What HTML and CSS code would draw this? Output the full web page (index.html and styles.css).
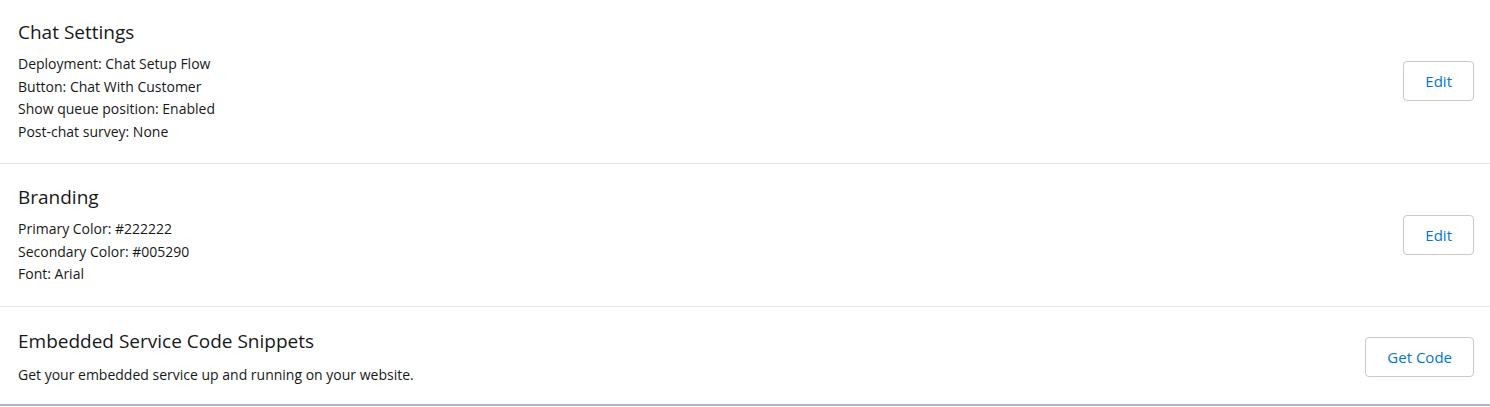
FILE: index.html
```html
<!DOCTYPE html>
<html lang="en">
<head>
  <meta charset="UTF-8">
  <title>Embedded Service Settings</title>
  <link rel="stylesheet" href="styles.css">
</head>
<body>

  <div class="panel">

    <div class="section first">
      <div class="info">
        <h3>Chat Settings</h3>
        <p>Deployment: Chat Setup Flow</p>
        <p>Button: Chat With Customer</p>
        <p>Show queue position: Enabled</p>
        <p>Post-chat survey: None</p>
      </div>
      <button class="btn">Edit</button>
    </div>

    <div class="section">
      <div class="info">
        <h3>Branding</h3>
        <p>Primary Color: #222222</p>
        <p>Secondary Color: #005290</p>
        <p>Font: Arial</p>
      </div>
      <button class="btn">Edit</button>
    </div>

    <div class="section last">
      <div class="info">
        <h3>Embedded Service Code Snippets</h3>
        <p>Get your embedded service up and running on your website.</p>
      </div>
      <button class="btn">Get Code</button>
    </div>

  </div>

</body>
</html>
```

FILE: styles.css
```css
body {
  font-family: 'Open Sans', sans-serif;
  background-color: #ffffff;
  color: #181818;
  margin: 0;
  padding: 0;
}

.panel {
  border-bottom: 2px solid #aab6cb;
}

.section {
  display: flex;
  justify-content: space-between;
  align-items: center;
  padding: 20px 16px 20px 18px;
  border-bottom: 1px solid #e5e5e5;
}

.section.first {
  padding-top: 19px;
}

.section.last {
  border-bottom: none;
  padding-top: 21px;
  padding-bottom: 18px;
}

h3 {
  font-size: 19px;
  font-weight: 400;
  line-height: 26px;
  margin: 0 0 8px 0;
}

.last h3 {
  margin-bottom: 10px;
}

p {
  font-size: 14px;
  line-height: 22.5px;
  margin: 0;
}

.btn {
  font-family: inherit;
  font-size: 15px;
  color: #0176d3;
  background-color: #ffffff;
  border: 1px solid #c9c9c9;
  border-radius: 4px;
  height: 40px;
  padding: 0 21px;
  cursor: pointer;
}

.btn:hover {
  background-color: #f3f3f3;
}
```
